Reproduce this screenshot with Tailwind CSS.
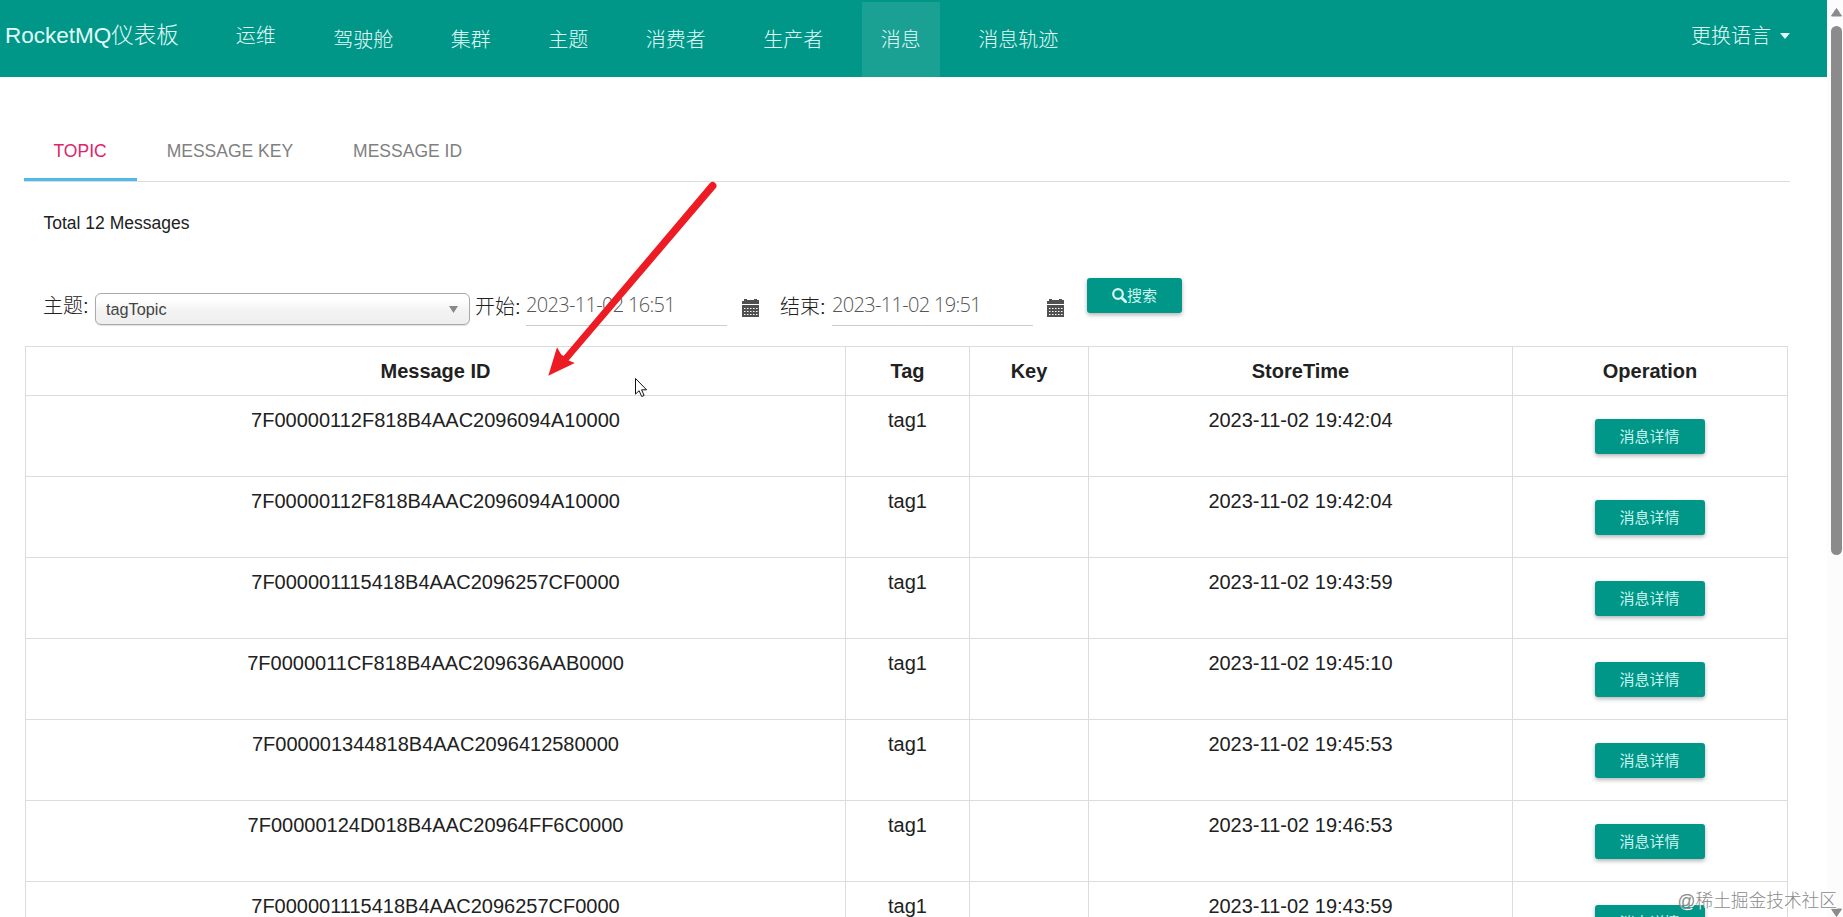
<!DOCTYPE html>
<html lang="zh-CN">
<head>
  <meta charset="UTF-8" />
  <meta name="viewport" content="width=device-width, initial-scale=1.0" />
  <title>RocketMQ仪表板</title>
  <script src="https://cdn.jsdelivr.net/npm/@tailwindcss/browser@4"></script>
</head>
<body class="relative flex h-screen overflow-hidden bg-white text-[#212121] font-['Liberation_Sans','Noto_Sans_CJK_SC',sans-serif]">

  <div class="w-[1827px] shrink-0">
    <!-- Navbar -->
    <nav class="flex h-[77px] bg-[#009688] pl-[5px] pr-[37px] text-xl text-[#e0fbf8] font-light">
      <a href="#" class="w-[212px] pt-[19px] text-[22.5px] leading-[34px] whitespace-nowrap">RocketMQ仪表板</a>
      <div class="flex gap-5 leading-[30px] whitespace-nowrap">
        <a href="#" class="px-[18.75px] pt-[21px]">运维</a>
        <a href="#" class="px-[18.75px] pt-[25px]">驾驶舱</a>
        <a href="#" class="px-[18.75px] pt-[25px]">集群</a>
        <a href="#" class="px-[18.75px] pt-[25px]">主题</a>
        <a href="#" class="px-[18.75px] pt-[25px]">消费者</a>
        <a href="#" class="px-[18.75px] pt-[25px]">生产者</a>
        <a href="#" class="mt-[2px] bg-white/10 px-[18.75px] pt-[23px]">消息</a>
        <a href="#" class="px-[18.75px] pt-[25px]">消息轨迹</a>
      </div>
      <a href="#" class="ml-auto flex gap-[9px] pt-[21px] leading-[30px]">更换语言
        <svg class="mt-[12px] h-[6px] w-[10px]" viewBox="0 0 10 6"><path d="M0 0h10L5 6z" fill="#e0fbf8" /></svg>
      </a>
    </nav>

    <!-- Tabs -->
    <div class="mt-12 ml-6 flex h-[57px] w-[1766px] border-b border-[#dcdcdc] text-[17.5px] leading-[52px] text-[#808080]">
      <a href="#" class="h-14 border-b-3 border-[#4ebbe6] pr-[30.5px] pl-[29.5px] text-[#e0246a]">TOPIC</a>
      <a href="#" class="pr-[30.5px] pl-[29.5px]">MESSAGE KEY</a>
      <a href="#" class="pr-[30.5px] pl-[29.5px]">MESSAGE ID</a>
    </div>

    <p class="mt-[27px] ml-[43.5px] text-[17.5px] leading-7">Total 12 Messages</p>

    <!-- Search form -->
    <form class="ml-[43px] flex h-[109px] items-start pt-[41px] text-xl leading-[30px] font-light whitespace-nowrap">
      <label class="mt-[13px] w-[52px]">主题:</label>
      <div class="mt-[15px] flex h-8 w-[375px] items-center justify-between rounded-md border border-[#aaa] bg-linear-to-b from-white from-20% via-[#f4f4f4] via-52% to-[#eee] pr-[11px] pl-[10px] text-[16.25px] font-normal text-[#444] shadow-[0_1px_1px_rgba(0,0,0,0.12)]">
        tagTopic
        <svg class="h-[7px] w-[9px]" viewBox="0 0 9 7"><path d="M0 0h9L4.5 7z" fill="#888" /></svg>
      </div>
      <label class="mt-[14px] ml-[5px] w-[51px]">开始:</label>
      <div class="mt-[13px] h-[35px] w-[201px] border-b border-[#ccc] font-['Open_Sans',sans-serif] leading-[28px] tracking-[-0.68px] text-[#555]">2023-11-02 16:51</div>
      <svg class="mt-[21px] ml-[15px] h-[18px] w-[17px]" viewBox="0 0 17 18" fill="#505050">
        <path d="M0 2h2V0h3v1h7V0h3v1h2v4H0zM0 6h17v12H0z" />
        <path d="M2 9.5h14M2 12.5h14M2 15.5h14" stroke="#fff" stroke-dasharray="1.5 1.5" />
      </svg>
      <label class="mt-[14px] ml-[21px] w-[52px]">结束:</label>
      <div class="mt-[13px] h-[35px] w-[201px] border-b border-[#ccc] font-['Open_Sans',sans-serif] leading-[28px] tracking-[-0.68px] text-[#555]">2023-11-02 19:51</div>
      <svg class="mt-[21px] ml-[14px] h-[18px] w-[17px]" viewBox="0 0 17 18" fill="#505050">
        <path d="M0 2h2V0h3v1h7V0h3v1h2v4H0zM0 6h17v12H0z" />
        <path d="M2 9.5h14M2 12.5h14M2 15.5h14" stroke="#fff" stroke-dasharray="1.5 1.5" />
      </svg>
      <button type="button" class="ml-[23px] flex h-[35px] w-[95px] items-center justify-center rounded-[3px] bg-[#009688] text-[15px] font-normal text-[#c8f5f0] shadow-[0_2px_4px_rgba(0,0,0,0.3)]">
        <svg class="h-[15px] w-[15px]" viewBox="0 0 15 15" fill="none" stroke="#d4f7f3"><circle cx="6" cy="6" r="4.8" stroke-width="2.2" /><path d="M9.7 9.7l4 4" stroke-width="2.8" stroke-linecap="round" /></svg>搜索
      </button>
    </form>

    <!-- Messages -->
    <table class="ml-[25px] w-[1763px] table-fixed border-collapse text-center text-xl leading-[28px]">
      <colgroup>
        <col class="w-[820px]" />
        <col class="w-[124px]" />
        <col class="w-[119px]" />
        <col class="w-[424px]" />
        <col class="w-[275px]" />
      </colgroup>
      <thead>
        <tr class="h-[49px]">
          <th class="border border-[#dcdcdc]">Message ID</th>
          <th class="border border-[#dcdcdc]">Tag</th>
          <th class="border border-[#dcdcdc]">Key</th>
          <th class="border border-[#dcdcdc]">StoreTime</th>
          <th class="border border-[#dcdcdc]">Operation</th>
        </tr>
      </thead>
      <tbody id="messages"></tbody>
    </table>
  </div>

  <!-- Scrollbar -->
  <div class="flex flex-1 flex-col items-center bg-[#fcfcfc] pt-2 pl-[3px]">
    <svg class="h-[9px] w-[11px]" viewBox="0 0 11 9"><path d="M5.5 .5L10.5 8H.5z" fill="#8b8b8b" stroke="#8b8b8b" stroke-linejoin="round" /></svg>
    <div class="mt-[9px] h-[529px] w-[11px] rounded-full bg-[#8b8b8b]"></div>
    <svg class="mt-auto h-[9px] w-[11px]" viewBox="0 0 11 9"><path d="M5.5 8.5L10.5 1H.5z" fill="#8b8b8b" stroke="#8b8b8b" stroke-linejoin="round" /></svg>
  </div>

  <!-- Red arrow -->
  <svg class="absolute top-[170px] left-[540px] h-[215px] w-[185px]" viewBox="540 170 185 215" fill="#ed1c24">
    <path d="M548.3 375.8L557 347.3 561.2 354.6 563.6 356 710.2 182.8A3.9 3.9 0 0 1 716 187.8L568.6 360.6 574.8 362.9z" />
  </svg>

  <!-- Mouse pointer -->
  <svg class="absolute top-[377px] left-[634px] h-[21px] w-[14px]" viewBox="0 0 14 21">
    <path d="M1.5 1.5v15.6l3.6-3.4 2.6 5.8 2.4-1.1-2.5-5.6h5z" fill="#fff" stroke="#111" />
  </svg>

  <div class="absolute right-[6px] bottom-[2px] text-[17.7px] leading-7 font-light whitespace-nowrap text-[#8a8a8a] [text-shadow:1px_1px_0_#fff]">@稀土掘金技术社区</div>

  <script>
    const messages = [
      ['7F00000112F818B4AAC2096094A10000', 'tag1', '2023-11-02 19:42:04'],
      ['7F00000112F818B4AAC2096094A10000', 'tag1', '2023-11-02 19:42:04'],
      ['7F000001115418B4AAC2096257CF0000', 'tag1', '2023-11-02 19:43:59'],
      ['7F0000011CF818B4AAC209636AAB0000', 'tag1', '2023-11-02 19:45:10'],
      ['7F000001344818B4AAC2096412580000', 'tag1', '2023-11-02 19:45:53'],
      ['7F00000124D018B4AAC20964FF6C0000', 'tag1', '2023-11-02 19:46:53'],
      ['7F000001115418B4AAC2096257CF0000', 'tag1', '2023-11-02 19:43:59'],
    ];

    document.getElementById('messages').innerHTML = messages.map(([id, tag, time]) => `
      <tr class="h-[81px] align-top">
        <td class="border border-[#dcdcdc] pt-[10px]">${id}</td>
        <td class="border border-[#dcdcdc] pt-[10px]">${tag}</td>
        <td class="border border-[#dcdcdc] pt-[10px]"></td>
        <td class="border border-[#dcdcdc] pt-[10px]">${time}</td>
        <td class="border border-[#dcdcdc] pt-[23px]">
          <button class="mx-auto block h-[35px] w-[110px] rounded-[3px] bg-[#009688] pr-px text-[15px] text-[#c8f5f0] shadow-[0_2px_4px_rgba(0,0,0,0.3)]">消息详情</button>
        </td>
      </tr>`).join('');
  </script>
</body>
</html>
